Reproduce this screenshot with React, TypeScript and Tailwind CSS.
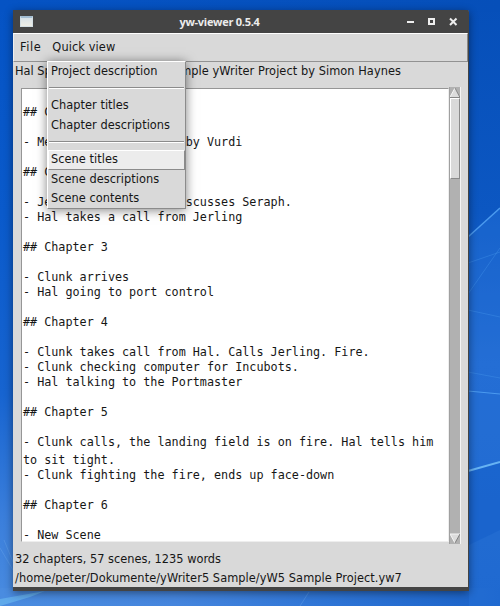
import React from 'react';

const lines: string[] = [
  '## Chapter 1', '', '- Meet Hal, threatened by Vurdi', '', '## Chapter 2', '',
  '- Jerling with Vurdi discusses Seraph.', '- Hal takes a call from Jerling', '',
  '## Chapter 3', '', '- Clunk arrives', '- Hal going to port control', '',
  '## Chapter 4', '', '- Clunk takes call from Hal. Calls Jerling. Fire.',
  '- Clunk checking computer for Incubots.', '- Hal talking to the Portmaster', '',
  '## Chapter 5', '', '- Clunk calls, the landing field is on fire. Hal tells him',
  'to sit tight.', '- Clunk fighting the fire, ends up face-down', '',
  '## Chapter 6', '', '- New Scene',
];

function Wallpaper() {
  return (
    <svg className="absolute inset-0" width="500" height="606" viewBox="0 0 500 606">
      <defs>
        <linearGradient id="left" x1="0" y1="0" x2="0" y2="1">
          <stop offset="0" stopColor="#0553c4" />
          <stop offset=".35" stopColor="#0a5acb" />
          <stop offset=".65" stopColor="#1764d0" />
          <stop offset=".85" stopColor="#3a7edb" />
          <stop offset="1" stopColor="#4a8ce0" />
        </linearGradient>
        <linearGradient id="right" x1="0" y1="0" x2="0" y2="1">
          <stop offset="0" stopColor="#064fb9" />
          <stop offset=".35" stopColor="#0c57c2" />
          <stop offset=".6" stopColor="#2169cf" />
          <stop offset="1" stopColor="#1a62c8" />
        </linearGradient>
        <linearGradient id="top" x1="0" y1="0" x2="1" y2="0">
          <stop offset="0" stopColor="#0553c4" />
          <stop offset="1" stopColor="#064fb9" />
        </linearGradient>
        <linearGradient id="bottom" x1="0" y1="0" x2="1" y2="0">
          <stop offset="0" stopColor="#4a8ce0" />
          <stop offset=".35" stopColor="#4585dd" />
          <stop offset=".65" stopColor="#2f75d6" />
          <stop offset="1" stopColor="#1a62c8" />
        </linearGradient>
      </defs>
      <rect width="250" height="606" fill="url(#left)" />
      <rect x="250" width="250" height="606" fill="url(#right)" />
      <rect width="500" height="12" fill="url(#top)" />
      <rect y="588" width="500" height="18" fill="url(#bottom)" />
      <path d="M469 237L500 208V606H469Z" fill="#2b77df" opacity=".35" />
      <path d="M469 470L500 462V530L469 545Z" fill="#0b55c2" opacity=".3" />
      <g fill="none" stroke="#4b9aef">
        <path d="M468 237L500 208" strokeWidth="1.5" />
        <path d="M468 294L500 248M468 263L500 252M468 310L500 317M468 372L500 378" opacity=".35" />
        <path d="M468 391L500 394" />
        <path d="M468 471L500 462" stroke="#67b3f3" strokeWidth="2" />
      </g>
      <path d="M0 599L45 591L30 597L0 606Z" fill="#68b5ee" opacity=".7" />
      <path d="M0 548L13 570M4 540L13 562M300 606L309 592" stroke="#69a6eb" opacity=".4" />
    </svg>
  );
}

function TitleBar() {
  return (
    <div className="flex h-[23px] shrink-0 items-center bg-[#444444] pl-[7px] pr-[10px]">
      <div className="h-[11px] w-[13px] border border-t-2 border-[#d4dfe4] border-t-[#a3bdd2] bg-gradient-to-b from-[#d8e2e8] to-[#eeeee6]" />
      <div className="flex-1 pr-[1px] text-center font-['Open_Sans',sans-serif] text-[11px] font-bold leading-[23px] tracking-[-0.27px] text-[#ececec] [font-stretch:normal]">
        yw-viewer 0.5.4
      </div>
      <svg width="51" height="12" viewBox="0 0 51 12" fill="none" stroke="#eeeeee" strokeWidth="2">
        <path d="M0 6H7" />
        <rect x="22" y="3" width="5" height="5" />
        <path d="M43 2.5L49.5 9M49.5 2.5L43 9" />
      </svg>
    </div>
  );
}

function Scrollbar() {
  return (
    <div className="flex h-[457px] w-[12px] shrink-0 flex-col border-l border-r border-l-[#a0a0a0] border-r-[#f4f4f4] bg-[#b1b1b1]">
      <svg width="10" height="11" viewBox="0 0 10 11" className="shrink-0">
        <path d="M5 1L0 10H10Z" fill="#dcdcdc" />
        <path d="M5 1L0 10" stroke="#f5f5f5" />
        <path d="M5 1L10 10.5H0" fill="none" stroke="#868686" />
      </svg>
      <div className="h-[81px] shrink-0 border border-b-[#8a8a8a] border-l-white border-r-[#8a8a8a] border-t-white bg-[#d9d9d9]" />
      <div className="flex-1" />
      <svg width="10" height="11" viewBox="0 0 10 11" className="shrink-0">
        <path d="M0 1H10L5 10Z" fill="#dcdcdc" />
        <path d="M5 10L0 1H10" fill="none" stroke="#f5f5f5" />
        <path d="M10 1L5 10" stroke="#808080" />
      </svg>
    </div>
  );
}

const item = 'h-[19.5px] pl-[3px] leading-[18px]';
const rule = 'mx-px h-[2px] border-t border-b border-t-[#8b8b8b] border-b-white';

function QuickViewMenu() {
  return (
    <div className="absolute left-[47px] top-[61px] h-[148px] w-[139px] whitespace-nowrap border border-b-[#8b8b8b] border-l-white border-r-[#8b8b8b] border-t-white bg-[#d9d9d9] tracking-[0.04px] shadow-[0_1px_10px_rgba(0,0,0,0.5)]">
      <div className={item}>Project description</div>
      <div className={`${rule} mb-[7px] mt-[5.5px]`} />
      <div className={item}>Chapter titles</div>
      <div className={item}>Chapter descriptions</div>
      <div className={`${rule} mb-[7px] mt-[6px]`} />
      <div className="h-[20px] border border-b-[#8b8b8b] border-l-white border-r-[#8b8b8b] border-t-white bg-[#ececec] pl-[2px] leading-[16px]">
        Scene titles
      </div>
      <div className="h-[19px] pl-[3px] leading-[17px]">Scene descriptions</div>
      <div className={item}>Scene contents</div>
    </div>
  );
}

export default function App() {
  return (
    <div className="relative h-[606px] w-[500px] overflow-hidden bg-[#0a56c4] pl-[13px] pt-[10px] font-['DejaVu_Sans_Condensed','DejaVu_Sans',sans-serif] text-[12.65px] text-[#161616] [font-stretch:condensed]">
      <Wallpaper />
      <div className="relative flex h-[581px] w-[456px] flex-col overflow-visible rounded-t-[2px] border-b-4 border-r border-b-[#444444] border-r-[#444444] bg-[#d9d9d9] shadow-[0_2px_9px_rgba(0,0,0,0.45)]">
        <TitleBar />
        <div className="flex h-[29px] shrink-0 items-center gap-[11px] border border-b-[#929292] border-l-[#eeeeee] border-r-[#888888] border-t-white pb-px pl-[6px]">
          <span className="tracking-[0.6px]">File</span>
          <span className="tracking-[0.1px]">Quick view</span>
        </div>
        <div className="flex h-[25px] w-[388px] shrink-0 justify-between whitespace-nowrap pl-[2px] leading-[18px]">
          <span>Hal Spacejock</span>
          <span className="tracking-[0.06px]">A sample yWriter Project by Simon Haynes</span>
        </div>
        <div className="flex h-[457px] shrink-0 pl-[8px]">
          <div className="mt-px h-[454px] w-[428px] shrink-0 overflow-hidden border border-b-[#eeeeee] border-l-[#969696] border-r-[#eeeeee] border-t-[#969696] bg-white pl-px pt-[16px] font-['DejaVu_Sans_Mono',monospace] text-[11.75px]">
            {lines.map((line, i) => (
              <div key={i} className={line.startsWith('to sit') ? 'h-[18px] whitespace-pre pt-[3px] leading-[15px]' : 'h-[15px] whitespace-pre leading-[15px]'}>
                {line}
              </div>
            ))}
          </div>
          <Scrollbar />
        </div>
        <div className="whitespace-nowrap pl-[2px] pt-[6px] leading-[18px]">
          <div className="pb-px">32 chapters, 57 scenes, 1235 words</div>
          <div className="tracking-[0.06px]">/home/peter/Dokumente/yWriter5 Sample/yW5 Sample Project.yw7</div>
        </div>
      </div>
      <QuickViewMenu />
    </div>
  );
}
